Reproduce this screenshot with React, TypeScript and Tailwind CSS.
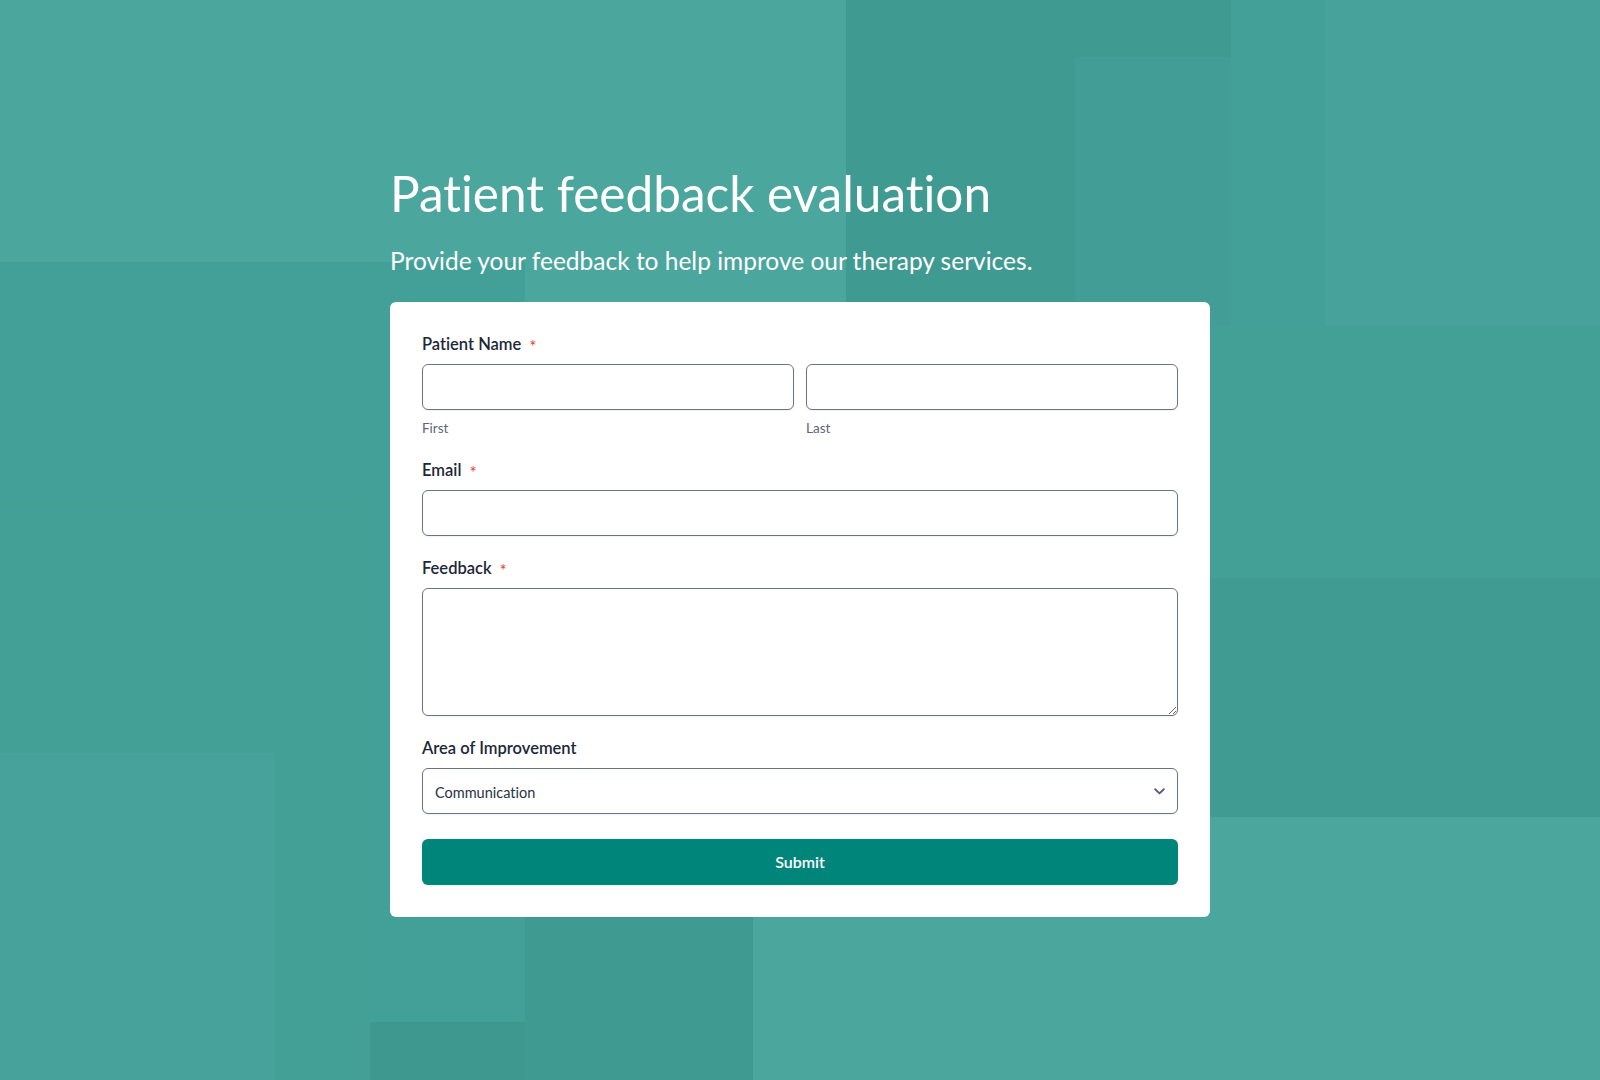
// Decorative background tiles, in page pixels
const tiles = [
  { c: 'bg-[#43a098]', x: 0, y: 262, w: 370, h: 238 },
  { c: 'bg-[#42a097]', x: 0, y: 500, w: 370, h: 580 },
  { c: 'bg-[#46a29a]', x: 0, y: 753, w: 275, h: 327 },
  { c: 'bg-[#43a098]', x: 370, y: 262, w: 155, h: 818 },
  { c: 'bg-[#3e988f]', x: 370, y: 1022, w: 155, h: 58 },
  { c: 'bg-[#3f9a91]', x: 525, y: 917, w: 228, h: 163 },
  { c: 'bg-[#3f9a91]', x: 846, y: 0, w: 385, h: 57 },
  { c: 'bg-[#3f9a91]', x: 846, y: 57, w: 229, h: 269 },
  { c: 'bg-[#419d95]', x: 1075, y: 57, w: 156, h: 269 },
  { c: 'bg-[#43a098]', x: 1231, y: 0, w: 94, h: 326 },
  { c: 'bg-[#46a29b]', x: 1325, y: 0, w: 275, h: 326 },
  { c: 'bg-[#42a097]', x: 1210, y: 326, w: 390, h: 252 },
  { c: 'bg-[#409b92]', x: 1210, y: 578, w: 390, h: 239 },
];

function Label({ text, required }: { text: string; required?: boolean }) {
  return (
    <label className="flex items-center text-[16.5px] leading-6 font-semibold text-[#1c2738] mb-2">
      {text}
      {required && <span className="relative top-[2px] ml-2 text-[17px] leading-none font-normal text-[#e0452f]">*</span>}
    </label>
  );
}

const inputCls =
  'block w-full h-[46px] rounded-md border border-[#6b7280] bg-white px-3 text-sm text-[#1c2738] shadow-[0_1px_2px_rgba(0,0,0,0.06)] outline-none';

export default function App() {
  return (
    <div
      className="relative min-h-screen overflow-hidden bg-[#4ba69e] [font-variant-ligatures:none]"
      style={{ fontFamily: 'Lato, "Open Sans", sans-serif' }}
    >
      <div className="absolute inset-0">
        {tiles.map((t, i) => (
          <div key={i} className={`absolute ${t.c}`} style={{ left: t.x, top: t.y, width: t.w, height: t.h }} />
        ))}
      </div>

      <div className="relative mx-auto w-[820px] pt-[163px] pb-[163px]">
        <h1 className="text-[49.5px] leading-[60px] font-normal text-white">Patient feedback evaluation</h1>
        <p className="mt-[22px] text-[24.5px] leading-8 text-white">
          Provide your feedback to help improve our therapy services.
        </p>

        <form className="mt-[25px] rounded-md bg-white px-8 pt-[30px] pb-8" onSubmit={(e) => e.preventDefault()}>
          <div className="flex flex-col gap-5">
            {/* Patient name */}
            <div>
              <Label text="Patient Name" required />
              <div className="grid grid-cols-2 gap-3">
                <div>
                  <input type="text" className={inputCls} />
                  <div className="mt-2 text-[13.5px] leading-5 text-[#5f6672]">First</div>
                </div>
                <div>
                  <input type="text" className={inputCls} />
                  <div className="mt-2 text-[13.5px] leading-5 text-[#5f6672]">Last</div>
                </div>
              </div>
            </div>

            <div>
              <Label text="Email" required />
              <input type="email" className={inputCls} />
            </div>

            <div>
              <Label text="Feedback" required />
              <textarea className="block w-full h-[128px] rounded-md border border-[#6b7280] bg-white px-3 py-2 text-sm shadow-[0_1px_2px_rgba(0,0,0,0.06)] outline-none" />
            </div>

            <div>
              <Label text="Area of Improvement" />
              <div className="relative">
                <select
                  defaultValue="Communication"
                  className={`${inputCls} appearance-none pt-1 pr-10 text-[14.5px] text-[#2a3242]`}
                >
                  <option>Communication</option>
                  <option>Treatment plan</option>
                  <option>Scheduling</option>
                  <option>Facilities</option>
                </select>
                <svg
                  className="pointer-events-none absolute right-[13px] top-1/2 -mt-[3px] h-[7px] w-[11px] text-[#5b6270]"
                  viewBox="0 0 11 7"
                  fill="none"
                >
                  <path d="M1.2 1.2 5.5 5.4 9.8 1.2" stroke="currentColor" strokeWidth="2" strokeLinecap="round" strokeLinejoin="round" />
                </svg>
              </div>
            </div>
          </div>

          <button
            type="submit"
            className="mt-[25px] block w-full h-[46px] rounded-md bg-[#00857a] text-[16px] font-semibold text-white shadow-[0_1px_2px_rgba(0,0,0,0.08)]"
          >
            Submit
          </button>
        </form>
      </div>
    </div>
  );
}
